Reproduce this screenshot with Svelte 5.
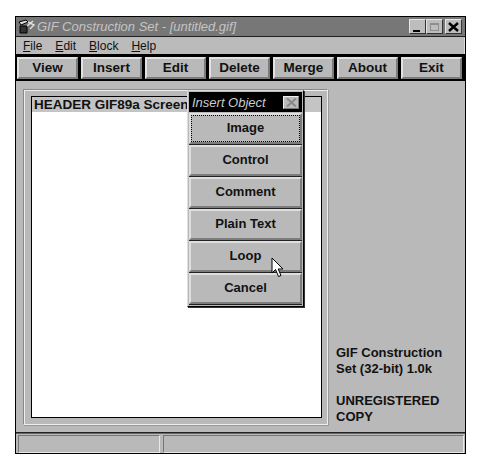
<script>
  const menus = [
    { key: 'F', rest: 'ile' },
    { key: 'E', rest: 'dit' },
    { key: 'B', rest: 'lock' },
    { key: 'H', rest: 'elp' },
  ];
  const tools = ['View', 'Insert', 'Edit', 'Delete', 'Merge', 'About', 'Exit'];
  const objects = ['Image', 'Control', 'Comment', 'Plain Text', 'Loop', 'Cancel'];
</script>

<div class="page">
  <div class="window">
    <div class="titlebar">
      <svg class="app-icon" width="18" height="16" viewBox="0 0 18 16">
        <path d="M1 3 L8 1 L10 3 L3 6 Z" fill="#ddd" stroke="#000" />
        <path d="M2 7 H9 V14 H2 Z" fill="#333" stroke="#000" />
        <path d="M9 7 L15 2 M10 3 L16 6 L12 10" fill="none" stroke="#e0e0e0" stroke-width="1.4" />
      </svg>
      <span class="title">GIF Construction Set - [untitled.gif]</span>
      <div class="caption-btns">
        <div class="cap"><span class="min"></span></div>
        <div class="cap"><span class="max"></span></div>
        <div class="cap close">
          <svg width="11" height="10" viewBox="0 0 11 10">
            <path d="M1 1 L10 9 M10 1 L1 9" stroke="#000" stroke-width="2.4" />
          </svg>
        </div>
      </div>
    </div>

    <div class="menubar">
      {#each menus as m}
        <span class="menu"><u>{m.key}</u>{m.rest}</span>
      {/each}
    </div>

    <div class="toolbar">
      {#each tools as t}
        <div class="tool">{t}</div>
      {/each}
    </div>

    <div class="client">
      <div class="group">
        <div class="list">
          <div class="row">HEADER GIF89a Screen</div>
        </div>
      </div>
      <div class="info">
        <p>GIF Construction<br />Set (32-bit) 1.0k</p>
        <p>UNREGISTERED<br />COPY</p>
      </div>
    </div>

    <div class="statusbar">
      <div class="pane first"></div>
      <div class="pane second"></div>
    </div>

    <div class="dialog">
      <div class="dlg-title">
        <span>Insert Object</span>
        <div class="dlg-close">
          <svg width="11" height="9" viewBox="0 0 11 9">
            <path d="M1 0.5 L10 8.5 M10 0.5 L1 8.5" stroke="#8a8a8a" stroke-width="2.2" />
          </svg>
        </div>
      </div>
      {#each objects as o, i}
        <div class="obj" class:focused={i === 0}><span>{o}</span></div>
      {/each}
    </div>

    <svg class="cursor" width="15" height="22" viewBox="0 0 15 22">
      <path d="M1 1 V16 L4.5 12.5 L7.5 19.5 L10 18.5 L7.2 12 H12 Z" fill="#fff" stroke="#000" />
    </svg>
  </div>
</div>

<style>
  :global(body) {
    margin: 0;
    background: #fff;
  }

  .page {
    width: 485px;
    height: 473px;
    padding: 16px 0 0 15px;
    box-sizing: border-box;
    font-family: 'Liberation Sans', Arial, sans-serif;
  }

  .window {
    position: relative;
    width: 451px;
    height: 438px;
    box-sizing: border-box;
    border: 1px solid #000;
    background: #b9b9b9;
    display: flex;
    flex-direction: column;
  }

  .titlebar {
    height: 19px;
    flex: none;
    background: #777;
    border-bottom: 1px solid #222;
    display: flex;
    align-items: center;
    padding: 0 2px;
  }

  .app-icon {
    flex: none;
  }

  .title {
    margin-left: 1px;
    font-style: italic;
    font-size: 13px;
    color: #c4c4c4;
    white-space: nowrap;
  }

  .caption-btns {
    margin-left: auto;
    display: flex;
    gap: 0;
    margin-right: 1px;
  }

  .cap {
    width: 17px;
    height: 15px;
    box-sizing: border-box;
    background: #bdbdbd;
    border: 1px solid;
    border-color: #e6e6e6 #333 #333 #e6e6e6;
    position: relative;
    display: flex;
    align-items: center;
    justify-content: center;
  }

  .min {
    position: absolute;
    left: 3px;
    bottom: 1px;
    width: 7px;
    height: 2px;
    background: #000;
  }

  .max {
    width: 9px;
    height: 8px;
    box-sizing: border-box;
    border: 1px solid #8e8e8e;
    border-top-width: 2px;
  }

  .close {
    margin-left: 2px;
  }

  .menubar {
    height: 16px;
    flex: none;
    margin-top: 1px;
    background: #bbb;
    display: flex;
    align-items: center;
    padding-left: 7px;
    gap: 13px;
    font-size: 12px;
    color: #111;
    border-right: 1px solid #ddd;
  }

  .toolbar {
    height: 27px;
    flex: none;
    box-sizing: border-box;
    background: #000;
    display: grid;
    grid-template-columns: repeat(7, 61px);
    column-gap: 3px;
    padding: 3px 0 2px 1px;
  }

  .tool {
    box-sizing: border-box;
    background: #b9b9b9;
    border: 2px solid;
    border-color: #e2e2e2 #7c7c7c #7c7c7c #e2e2e2;
    display: flex;
    align-items: center;
    justify-content: center;
    padding-bottom: 1px;
    font-size: 13.5px;
    font-weight: 700;
    color: #111;
  }

  .client {
    flex: 1;
    display: flex;
    padding: 8px 0 7px 7px;
    min-height: 0;
    border-bottom: 1px solid #222;
    gap: 8px;
  }

  .group {
    width: 305px;
    flex: none;
    box-sizing: border-box;
    border: 1px solid;
    border-color: #888 #eee #eee #888;
    padding: 6px 5px 6px 7px;
    display: flex;
    box-shadow: inset 1px 1px 0 #eee, 1px 1px 0 #999;
  }

  .list {
    flex: 1;
    background: #fff;
    border: 1px solid #000;
  }

  .row {
    height: 15px;
    padding-left: 2px;
    background: #c4c4c4;
    font-size: 13.5px;
    font-weight: 700;
    line-height: 15px;
    color: #111;
    white-space: nowrap;
    overflow: hidden;
  }

  .info {
    flex: 1;
    align-self: flex-end;
    font-size: 13px;
    font-weight: 700;
    line-height: 16px;
    color: #111;
  }

  .info p {
    margin: 0 0 16px;
    white-space: nowrap;
  }

  .info p:last-child {
    margin-bottom: 0;
  }

  .statusbar {
    height: 20px;
    flex: none;
    box-sizing: border-box;
    display: flex;
    gap: 3px;
    padding: 1px 1px 0 2px;
    border-top: 1px solid #666;
  }

  .pane {
    box-sizing: border-box;
    height: 18px;
    border: 1px solid;
    border-color: #777 #e8e8e8 #e8e8e8 #777;
  }

  .first {
    width: 142px;
  }

  .second {
    flex: 1;
  }

  .dialog {
    position: absolute;
    left: 171px;
    top: 73px;
    width: 117px;
    height: 217px;
    box-sizing: border-box;
    background: #bbb;
    border: 1px solid;
    border-color: #ddd #000 #000 #ddd;
    box-shadow: 1px 1px 0 #333;
    padding: 1px 1px 0;
    display: flex;
    flex-direction: column;
  }

  .dlg-title {
    height: 20px;
    flex: none;
    background: #000;
    display: flex;
    align-items: center;
    justify-content: space-between;
    padding: 0 3px 0 3px;
    font-style: italic;
    font-size: 13px;
    color: #ccc;
  }

  .dlg-close {
    width: 16px;
    height: 13px;
    box-sizing: border-box;
    background: #bbb;
    border: 1px solid;
    border-color: #eee #777 #777 #eee;
    display: flex;
    align-items: center;
    justify-content: center;
  }

  .obj {
    height: 31px;
    flex: none;
    margin-top: 1px;
    box-sizing: border-box;
    background: #b9b9b9;
    border: 2px solid;
    border-color: #dfdfdf #7c7c7c #7c7c7c #dfdfdf;
    box-shadow: 0 1px 0 #222;
    display: flex;
    align-items: center;
    justify-content: center;
    font-size: 13px;
    font-weight: 700;
    color: #111;
  }

  .obj span {
    margin-top: -3px;
  }

  .focused {
    position: relative;
    outline: 1px dotted #000;
    outline-offset: -3px;
  }

  .cursor {
    position: absolute;
    left: 255px;
    top: 240px;
  }
</style>
